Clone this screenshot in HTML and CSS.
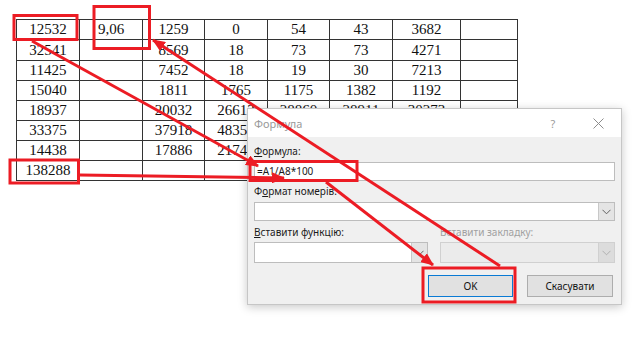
FILE: index.html
```html
<!DOCTYPE html>
<html lang="uk">
<head>
<meta charset="utf-8">
<title>Формула</title>
<link rel="stylesheet" href="styles.css">
</head>
<body>
<div class="sheet">
  <div class="c">12532</div><div class="c">9,06</div><div class="c">1259</div><div class="c">0</div><div class="c">54</div><div class="c">43</div><div class="c">3682</div><div class="c"></div>
  <div class="c tall">32541</div><div class="c tall"></div><div class="c tall">8569</div><div class="c tall">18</div><div class="c tall">73</div><div class="c tall">73</div><div class="c tall">4271</div><div class="c tall"></div>
  <div class="c">11425</div><div class="c"></div><div class="c">7452</div><div class="c">18</div><div class="c">19</div><div class="c">30</div><div class="c">7213</div><div class="c"></div>
  <div class="c">15040</div><div class="c"></div><div class="c">1811</div><div class="c">1765</div><div class="c">1175</div><div class="c">1382</div><div class="c">1192</div><div class="c"></div>
  <div class="c">18937</div><div class="c"></div><div class="c">20032</div><div class="c">26612</div><div class="c">28860</div><div class="c">28911</div><div class="c">30273</div><div class="c"></div>
  <div class="c">33375</div><div class="c"></div><div class="c">37918</div><div class="c">48351</div><div class="c"></div><div class="c"></div><div class="c"></div><div class="c"></div>
  <div class="c">14438</div><div class="c"></div><div class="c">17886</div><div class="c">21745</div><div class="c"></div><div class="c"></div><div class="c"></div><div class="c"></div>
  <div class="c">138288</div><div class="c"></div><div class="c"></div><div class="c"></div><div class="c"></div><div class="c"></div><div class="c"></div><div class="c"></div>
</div>

<div class="dialog">
  <div class="titlebar">
    <span class="title">Формула</span>
    <span class="help">?</span>
    <span class="close"><svg width="11" height="11" viewBox="0 0 11 11"><path d="M0.5 0.5 L10.5 10.5 M10.5 0.5 L0.5 10.5" stroke="#8c8c8c" stroke-width="1" fill="none"/></svg></span>
  </div>
  <div class="body">
    <div class="label"><u>Ф</u>ормула:</div>
    <div class="field">=A1/A8*100</div>
    <div class="label l2">Ф<u>о</u>рмат номерів:</div>
    <div class="select s2"><span class="val"></span><span class="arrow"><svg width="9" height="6" viewBox="0 0 9 6"><path d="M0.5 0.8 L4.5 4.8 L8.5 0.8" stroke="#606060" fill="none"/></svg></span></div>
    <div class="pair">
      <div class="col">
        <div class="label"><u>В</u>ставити функцію:</div>
        <div class="select s3"><span class="val"></span><span class="arrow"><svg width="9" height="6" viewBox="0 0 9 6"><path d="M0.5 0.8 L4.5 4.8 L8.5 0.8" stroke="#606060" fill="none"/></svg></span></div>
      </div>
      <div class="col">
        <div class="label disabled">Вставити закладку:</div>
        <div class="select s3 off"><span class="val"></span><span class="arrow"><svg width="9" height="6" viewBox="0 0 9 6"><path d="M0.5 0.8 L4.5 4.8 L8.5 0.8" stroke="#b0b0b0" fill="none"/></svg></span></div>
      </div>
    </div>
    <div class="buttons">
      <div class="btn ok">OK</div>
      <div class="btn cancel">Скасувати</div>
    </div>
  </div>
</div>

<svg class="marks" width="643" height="338" viewBox="0 0 643 338">
  <defs>
    <marker id="ah" markerUnits="userSpaceOnUse" markerWidth="13" markerHeight="11" refX="12" refY="5.5" orient="auto">
      <path d="M0 0 L13 5.5 L0 11 Z" fill="#ec1c24"/>
    </marker>
  </defs>
  <g fill="none" stroke="#ec1c24" stroke-width="3">
    <rect x="14" y="15.5" width="63" height="24"/>
    <rect x="94" y="6.5" width="55.5" height="42"/>
    <rect x="10" y="160" width="68.5" height="23"/>
    <rect x="250" y="161.5" width="107" height="19"/>
    <rect x="423" y="268" width="92" height="34"/>
    <line x1="32" y1="41" x2="258" y2="166" marker-end="url(#ah)"/>
    <line x1="80" y1="175" x2="284" y2="178" marker-end="url(#ah)"/>
    <line x1="500" y1="266" x2="153" y2="40" marker-end="url(#ah)"/>
    <line x1="326" y1="182" x2="433" y2="265" marker-end="url(#ah)"/>
  </g>
</svg>
</body>
</html>
```

FILE: styles.css
```css
html, body {
  margin: 0;
  padding: 0;
}
body {
  width: 643px;
  height: 338px;
  position: relative;
  overflow: hidden;
  background: #ffffff;
  font-family: "Liberation Serif", serif;
}

/* table */
.sheet {
  display: grid;
  grid-template-columns: 63px 63px 62px 63px 62px 63px 68px 57px;
  width: max-content;
  margin: 19px 0 0 16px;
  border-left: 1px solid #333;
  border-top: 1px solid #333;
}
.c {
  box-sizing: border-box;
  height: 20px;
  border-right: 1px solid #333;
  border-bottom: 1px solid #333;
  text-align: center;
  font-size: 15px;
  line-height: 19px;
  color: #111;
  white-space: nowrap;
  overflow: hidden;
}
.c.tall {
  height: 21px;
  line-height: 20px;
}

/* dialog */
.dialog {
  position: absolute;
  left: 247px;
  top: 108px;
  width: 375px;
  height: 197px;
  box-sizing: border-box;
  border: 1px solid #c6c6c6;
  background: #f0f0f0;
  box-shadow: 0 2px 9px rgba(0, 0, 0, 0.22);
  font-family: "Noto Sans", sans-serif;
  font-size: 10px;
  color: #1a1a1a;
  display: flex;
  flex-direction: column;
}
.titlebar {
  height: 28px;
  background: #ffffff;
  display: flex;
  align-items: center;
}
.title {
  flex: 1;
  padding-left: 6px;
  color: #9a9a9a;
  font-size: 11px;
}
.help {
  width: 30px;
  text-align: center;
  color: #9a9a9a;
  font-size: 11px;
}
.close {
  width: 46px;
  margin-left: 7px;
  display: flex;
  justify-content: center;
  align-items: center;
}
.body {
  flex: 1;
  padding: 7px 6px 0 6px;
  display: flex;
  flex-direction: column;
}
.label {
  height: 15px;
  line-height: 15px;
  white-space: nowrap;
}
.label.l2 {
  margin-top: 3px;
}
.label.disabled {
  color: #a0a0a0;
}
.field {
  margin-top: 3px;
  height: 19px;
  box-sizing: border-box;
  border: 1px solid #bdbdbd;
  background: #fff;
  line-height: 17px;
  padding-left: 2px;
}
.select {
  display: flex;
  box-sizing: border-box;
  border: 1px solid #bdbdbd;
  background: #fff;
}
.select .val {
  flex: 1;
}
.select .arrow {
  width: 15px;
  background: #e4e4e4;
  border-left: 1px solid #c8c8c8;
  display: flex;
  align-items: center;
  justify-content: center;
}
.select.s2 {
  margin-top: 3px;
  height: 19px;
}
.select.s3 {
  margin-top: 2px;
  height: 21px;
}
.select.off {
  background: #ebebeb;
  border-color: #d0d0d0;
}
.select.off .arrow {
  background: #dcdcdc;
  border-left-color: #d0d0d0;
}
.pair {
  margin-top: 4px;
  display: flex;
  gap: 12px;
}
.col {
  flex: 1;
  display: flex;
  flex-direction: column;
}
.col:first-child {
  flex: 0 0 174px;
}
.buttons {
  margin-top: 12px;
  margin-right: 2px;
  display: flex;
  justify-content: flex-end;
  gap: 14px;
}
.btn {
  height: 22px;
  box-sizing: border-box;
  background: #e1e1e1;
  border: 1px solid #adadad;
  display: flex;
  align-items: center;
  justify-content: center;
  color: #111;
}
.btn.ok {
  width: 85px;
  border-color: #0a7ad4;
}
.btn.cancel {
  width: 86px;
}

/* annotations overlay */
.marks {
  position: absolute;
  left: 0;
  top: 0;
  pointer-events: none;
}
```
